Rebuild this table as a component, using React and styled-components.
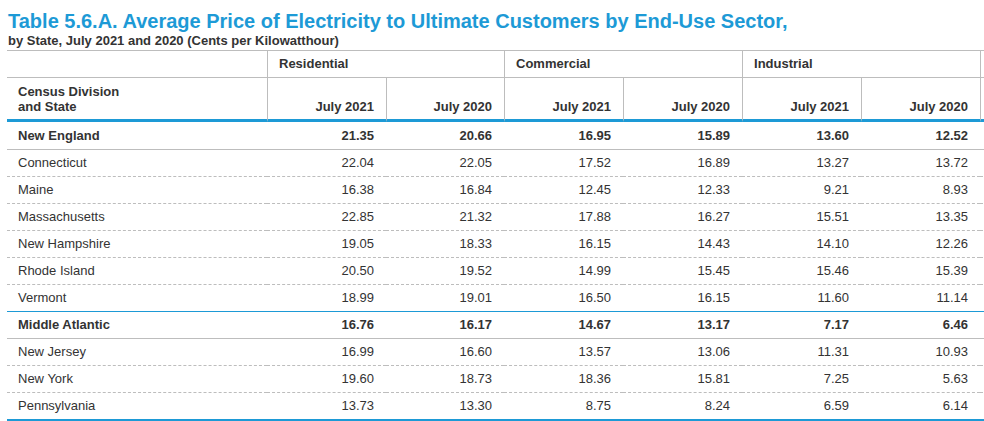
import React from "react";
import styled, { createGlobalStyle } from "styled-components";

const Global = createGlobalStyle`
  html, body { margin: 0; padding: 0; background: #fff; overflow: hidden; }
  body { font-family: "Liberation Sans", Arial, sans-serif; color: #333; }
`;

const Page = styled.div`
  padding: 10px 0 0 7px;
  width: 984px;
  box-sizing: border-box;
  overflow: hidden;
`;

const Title = styled.h1`
  margin: 0 0 0 1px;
  font-size: 20px;
  line-height: 22px;
  font-weight: bold;
  color: #1d9ad6;
  white-space: nowrap;
`;

const Subtitle = styled.div`
  margin: 2px 0 2px 1px;
  font-size: 13px;
  line-height: 14px;
  font-weight: bold;
  color: #333;
  white-space: nowrap;
`;

const Table = styled.table`
  border-collapse: separate;
  border-spacing: 0;
  table-layout: fixed;
  width: 1034px;
  font-size: 13px;
  color: #333;
`;

const HeadCell = styled.th`
  font-weight: bold;
  padding: 0 12px 0 11px;
  border-bottom: 1px solid #bdbdbd;
  border-left: ${(p) => (p.$first ? "none" : "1px solid #bdbdbd")};
  white-space: nowrap;
  overflow: hidden;
`;

const GroupCell = styled(HeadCell)`
  border-top: 1px solid #bdbdbd;
  text-align: left;
  line-height: 26px;
  vertical-align: middle;
`;

const SubCell = styled(HeadCell)`
  text-align: ${(p) => (p.$first ? "left" : "right")};
  line-height: 15px;
  vertical-align: bottom;
  padding-top: 6px;
  padding-bottom: 5px;
  border-bottom: 3px solid #1d9ad6;
`;

const Row = styled.tr`
  &:first-child td {
    padding-top: 1px;
  }
`;

const Cell = styled.td`
  padding: 0 12px 0 11px;
  line-height: 26px;
  text-align: ${(p) => (p.$name ? "left" : "right")};
  font-weight: ${(p) => (p.$bold ? "bold" : "normal")};
  border-bottom: ${(p) =>
    p.$edge === "end"
      ? "3px solid #1d9ad6"
      : p.$edge === "group"
      ? "1px solid #1d9ad6"
      : p.$edge === "division"
      ? "1px solid #bdbdbd"
      : "1px dashed #bdbdbd"};
  white-space: nowrap;
`;

const widths = [260, 119, 118, 119, 119, 119, 119, 62];

const data = [
  { name: "New England", d: true, v: ["21.35", "20.66", "16.95", "15.89", "13.60", "12.52"] },
  { name: "Connecticut", v: ["22.04", "22.05", "17.52", "16.89", "13.27", "13.72"] },
  { name: "Maine", v: ["16.38", "16.84", "12.45", "12.33", "9.21", "8.93"] },
  { name: "Massachusetts", v: ["22.85", "21.32", "17.88", "16.27", "15.51", "13.35"] },
  { name: "New Hampshire", v: ["19.05", "18.33", "16.15", "14.43", "14.10", "12.26"] },
  { name: "Rhode Island", v: ["20.50", "19.52", "14.99", "15.45", "15.46", "15.39"] },
  { name: "Vermont", v: ["18.99", "19.01", "16.50", "16.15", "11.60", "11.14"] },
  { name: "Middle Atlantic", d: true, v: ["16.76", "16.17", "14.67", "13.17", "7.17", "6.46"] },
  { name: "New Jersey", v: ["16.99", "16.60", "13.57", "13.06", "11.31", "10.93"] },
  { name: "New York", v: ["19.60", "18.73", "18.36", "15.81", "7.25", "5.63"] },
  { name: "Pennsylvania", v: ["13.73", "13.30", "8.75", "8.24", "6.59", "6.14"] },
];

function edgeFor(i) {
  const r = data[i];
  if (i === data.length - 1) return "end";
  if (r.d) return "division";
  if (data[i + 1].d) return "group";
  return "state";
}

export default function App() {
  return (
    <>
      <Global />
      <Page>
        <Title>
          Table 5.6.A. Average Price of Electricity to Ultimate Customers by End-Use Sector,
        </Title>
        <Subtitle>by State, July 2021 and 2020 (Cents per Kilowatthour)</Subtitle>
        <Table>
          <colgroup>
            {widths.map((w, i) => (
              <col key={i} style={{ width: w }} />
            ))}
          </colgroup>
          <thead>
            <tr>
              <GroupCell $first />
              <GroupCell colSpan={2}>Residential</GroupCell>
              <GroupCell colSpan={2}>Commercial</GroupCell>
              <GroupCell colSpan={2}>Industrial</GroupCell>
              <GroupCell />
            </tr>
            <tr>
              <SubCell $first>
                Census Division
                <br />
                and State
              </SubCell>
              <SubCell>July 2021</SubCell>
              <SubCell>July 2020</SubCell>
              <SubCell>July 2021</SubCell>
              <SubCell>July 2020</SubCell>
              <SubCell>July 2021</SubCell>
              <SubCell>July 2020</SubCell>
              <SubCell />
            </tr>
          </thead>
          <tbody>
            {data.map((r, i) => {
              const edge = edgeFor(i);
              return (
                <Row key={r.name}>
                  <Cell $name $bold={r.d} $edge={edge}>
                    {r.name}
                  </Cell>
                  {r.v.map((x, j) => (
                    <Cell key={j} $bold={r.d} $edge={edge}>
                      {x}
                    </Cell>
                  ))}
                  <Cell $edge={edge} />
                </Row>
              );
            })}
          </tbody>
        </Table>
      </Page>
    </>
  );
}
